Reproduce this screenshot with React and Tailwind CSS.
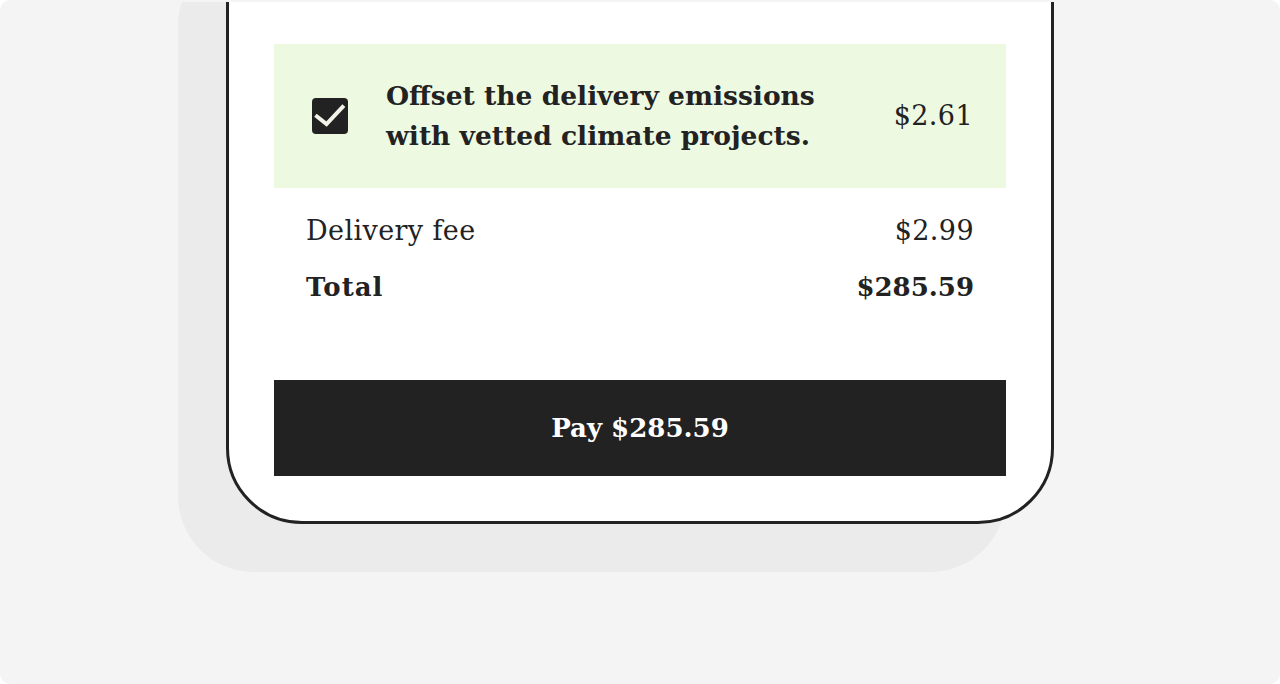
export default function App() {
  return (
    <div className="w-[1280px] h-[684px] bg-white">
      <div
        className="h-full rounded-[10px] bg-[#f4f4f4] pt-[2px] text-[#222222]"
        style={{ fontFamily: '"DejaVu Serif", serif' }}
      >
        <div className="h-[600px] overflow-hidden">
          {/* Phone frame */}
          <div className="mx-auto -mt-[100px] w-[828px] rounded-[76px] border-[3px] border-[#222222] bg-white px-[45px] pt-[139px] pb-[45px] shadow-[-48px_48px_0_0_#ebebeb]">
            {/* Climate offset */}
            <div className="flex h-[144px] items-center bg-[#eef9e2] pl-[38px] pr-[33px]">
              <div className="flex h-9 w-9 shrink-0 items-center justify-center rounded-[4px] bg-[#222222]">
                <svg width="36" height="36" viewBox="0 0 36 36" fill="none">
                  <path
                    d="M5 18.5 L14.5 26 L30.5 9"
                    stroke="#f3f3ea"
                    strokeWidth="4"
                    strokeLinecap="square"
                  />
                </svg>
              </div>
              <p className="ml-[38px] flex-1 text-[26.5px] font-bold leading-[40px]">
                Offset the delivery emissions
                <br />
                with vetted climate projects.
              </p>
              <span className="text-[27px] leading-8 tracking-[0.4px]">$2.61</span>
            </div>

            {/* Summary */}
            <div className="mt-[27px] flex justify-between px-8 text-[27px] leading-8 tracking-[0.4px]">
              <span>Delivery fee</span>
              <span>$2.99</span>
            </div>
            <div className="mt-6 flex justify-between px-8 text-[26px] font-bold leading-8">
              <span className="tracking-[1px]">Total</span>
              <span>$285.59</span>
            </div>

            <button className="mt-[77px] flex h-24 w-full items-center justify-center bg-[#222222] text-[26px] font-bold text-white">
              Pay $285.59
            </button>
          </div>
        </div>
      </div>
    </div>
  );
}
